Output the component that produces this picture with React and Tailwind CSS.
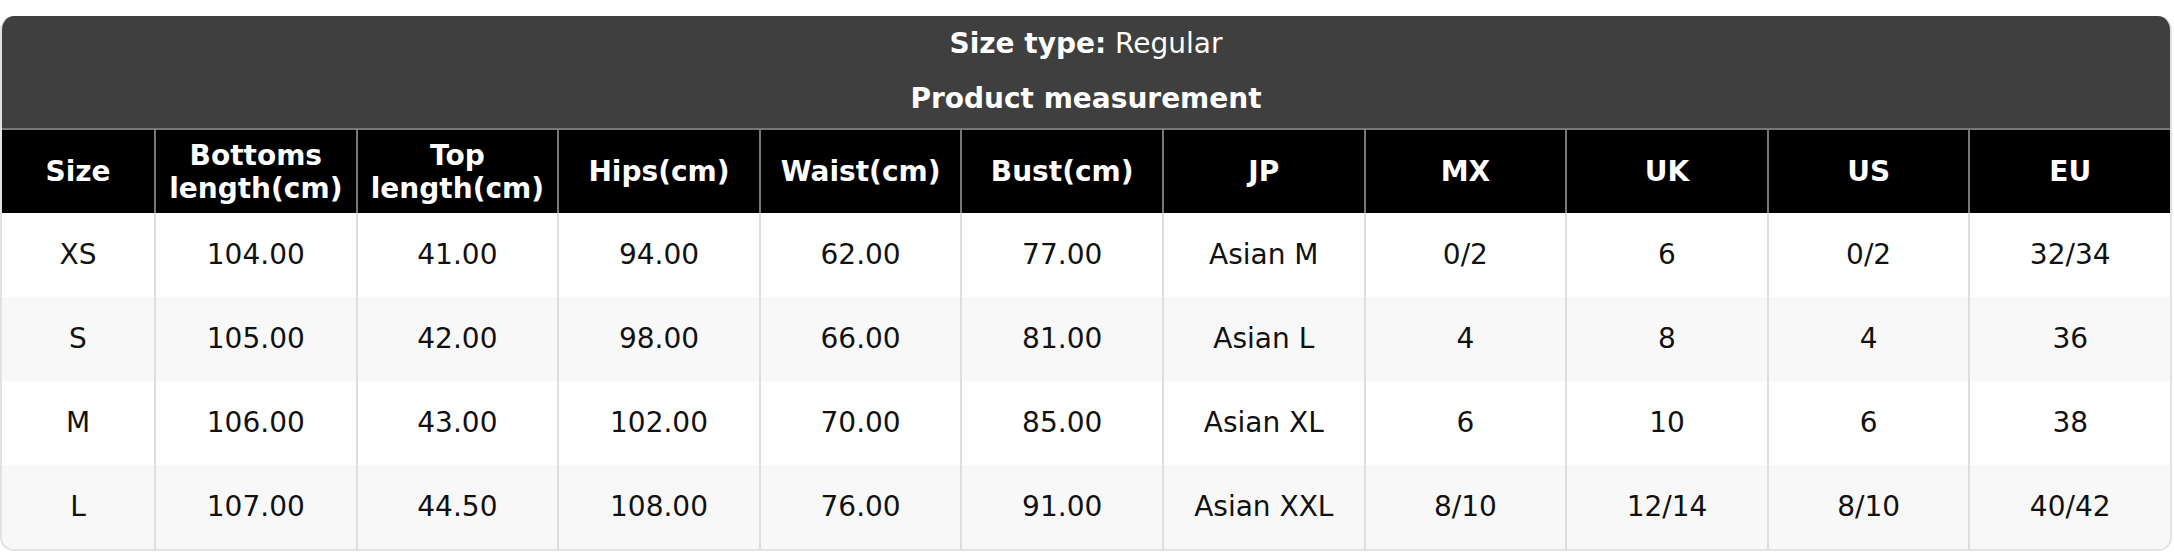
import React from 'react';

const headers = [
  'Size',
  ['Bottoms', 'length(cm)'],
  ['Top', 'length(cm)'],
  'Hips(cm)',
  'Waist(cm)',
  'Bust(cm)',
  'JP',
  'MX',
  'UK',
  'US',
  'EU',
];

const rows = [
  ['XS', '104.00', '41.00', '94.00', '62.00', '77.00', 'Asian M', '0/2', '6', '0/2', '32/34'],
  ['S', '105.00', '42.00', '98.00', '66.00', '81.00', 'Asian L', '4', '8', '4', '36'],
  ['M', '106.00', '43.00', '102.00', '70.00', '85.00', 'Asian XL', '6', '10', '6', '38'],
  ['L', '107.00', '44.50', '108.00', '76.00', '91.00', 'Asian XXL', '8/10', '12/14', '8/10', '40/42'],
];

const SizeChart = () => {
  return (
    <div className="bg-white pt-4 pr-[2px]" style={{ fontFamily: '"DejaVu Sans", Verdana, sans-serif' }}>
      <div className="overflow-hidden rounded-[14px] border-x-2 border-b-2 border-[#e2e2e2]">
        <div className="bg-[#3f3f3f] text-center text-white">
          <div className="pt-3 text-[28px] leading-[32px]">
            <span className="font-bold">Size type:</span> Regular
          </div>
          <div className="pt-[23px] pb-[13px] text-[28px] font-bold leading-[32px]">Product measurement</div>
        </div>

        <div className="grid grid-cols-[152px_repeat(10,1fr)] border-t-2 border-[#777] bg-black text-white">
          {headers.map((h, i) => (
            <div
              key={i}
              className={`flex h-[83px] flex-col items-center justify-center text-center text-[28px] font-bold leading-[33px] ${
                i > 0 ? 'border-l-2 border-[#777]' : ''
              }`}
            >
              {Array.isArray(h) ? h.map((line) => <span key={line}>{line}</span>) : h}
            </div>
          ))}
        </div>

        {rows.map((row, r) => (
          <div
            key={r}
            className={`grid grid-cols-[152px_repeat(10,1fr)] text-[#111] ${r % 2 === 1 ? 'bg-[#f8f8f8]' : 'bg-white'}`}
          >
            {row.map((cell, i) => (
              <div
                key={i}
                className={`flex h-[84px] items-center justify-center text-[28px] ${
                  i > 0 ? 'border-l-2 border-[#dedede]' : ''
                }`}
              >
                {cell}
              </div>
            ))}
          </div>
        ))}
      </div>
    </div>
  );
};

export default function App() {
  return <SizeChart />;
}
